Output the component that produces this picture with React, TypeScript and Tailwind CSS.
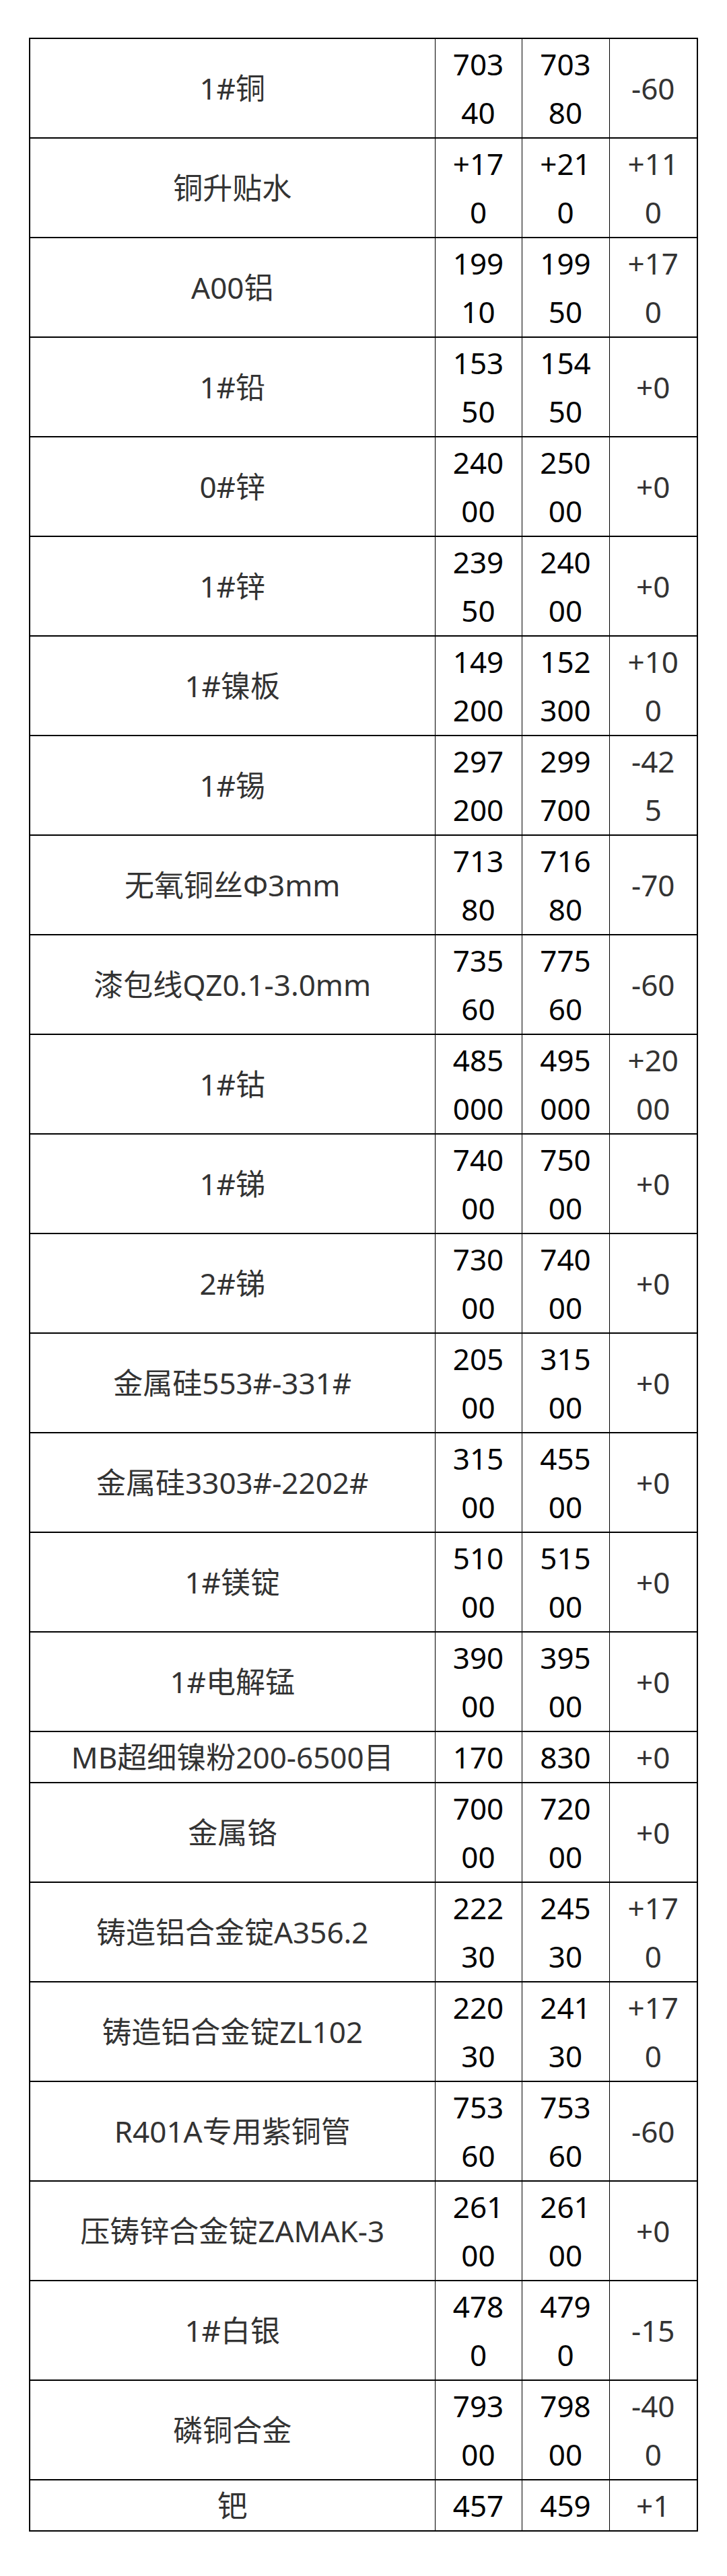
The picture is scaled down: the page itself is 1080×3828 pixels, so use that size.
const rows: [string, string, string, string][] = [
  ['1#铜', '70340', '70380', '-60'],
  ['铜升贴水', '+170', '+210', '+110'],
  ['A00铝', '19910', '19950', '+170'],
  ['1#铅', '15350', '15450', '+0'],
  ['0#锌', '24000', '25000', '+0'],
  ['1#锌', '23950', '24000', '+0'],
  ['1#镍板', '149200', '152300', '+100'],
  ['1#锡', '297200', '299700', '-425'],
  ['无氧铜丝Φ3mm', '71380', '71680', '-70'],
  ['漆包线QZ0.1-3.0mm', '73560', '77560', '-60'],
  ['1#钴', '485000', '495000', '+2000'],
  ['1#锑', '74000', '75000', '+0'],
  ['2#锑', '73000', '74000', '+0'],
  ['金属硅553#-331#', '20500', '31500', '+0'],
  ['金属硅3303#-2202#', '31500', '45500', '+0'],
  ['1#镁锭', '51000', '51500', '+0'],
  ['1#电解锰', '39000', '39500', '+0'],
  ['MB超细镍粉200-6500目', '170', '830', '+0'],
  ['金属铬', '70000', '72000', '+0'],
  ['铸造铝合金锭A356.2', '22230', '24530', '+170'],
  ['铸造铝合金锭ZL102', '22030', '24130', '+170'],
  ['R401A专用紫铜管', '75360', '75360', '-60'],
  ['压铸锌合金锭ZAMAK-3', '26100', '26100', '+0'],
  ['1#白银', '4780', '4790', '-15'],
  ['磷铜合金', '79300', '79800', '-400'],
  ['钯', '457', '459', '+1'],
]

export default function App() {
  return (
    <div className="min-h-screen bg-white pt-14">
      <table className="mx-auto w-[992px] table-fixed border-collapse border-2 border-black font-['Noto_Sans','Noto_Sans_CJK_SC',sans-serif] text-[44px] leading-[72px]">
        <colgroup>
          <col className="w-[602px]" />
          <col className="w-[129px]" />
          <col className="w-[130px]" />
          <col className="w-[131px]" />
        </colgroup>
        <tbody>
          {rows.map(([name, low, high, change]) => (
            <tr key={name}>
              <td className="border-x-[1.5px] border-y-2 border-black px-2 py-px text-center align-middle text-[#333]">
                {name}
              </td>
              <td className="border-x-[1.5px] border-y-2 border-black px-6 py-px text-center align-middle break-all text-black">
                {low}
              </td>
              <td className="border-x-[1.5px] border-y-2 border-black px-6 py-px text-center align-middle break-all text-black">
                {high}
              </td>
              <td className="border-x-[1.5px] border-y-2 border-black px-6 py-px text-center align-middle break-all text-[#333]">
                {change}
              </td>
            </tr>
          ))}
        </tbody>
      </table>
    </div>
  )
}
